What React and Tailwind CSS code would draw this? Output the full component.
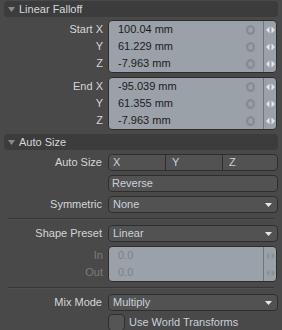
import React from 'react';

const Tri = () => (
    <svg width="7" height="5" viewBox="0 0 7 5" className="shrink-0">
        <path d="M0 0 H7 L3.5 5 Z" fill="#8a8a8a" />
    </svg>
);

const Header = ({ title }) => (
    <div className="mx-[4px] h-[16px] rounded-[4px] bg-[#3c3c3c] flex items-center pl-[4px] gap-[4px] text-[#d4d8dc]">
        <Tri />
        <span className="leading-none">{title}</span>
    </div>
);

const Arrows = ({ dim }) => (
    <svg width="9" height="8" viewBox="0 0 9 8">
        <g fill={dim ? '#8a9096' : '#e2e6ea'}>
            <path d="M0 4 L3.5 0.5 V7.5 Z" />
            <path d="M9 4 L5.5 0.5 V7.5 Z" />
        </g>
    </svg>
);

const Ring = () => (
    <svg width="9" height="10" viewBox="0 0 9 10">
        <ellipse cx="4.5" cy="5" rx="3.4" ry="3.9" fill="none" stroke="#858b91" strokeWidth="2.2" />
    </svg>
);

const Label = ({ text, dim }) => (
    <div className={`w-[103px] shrink-0 text-right pr-[1px] ${dim ? 'text-[#7c7c7c]' : 'text-[#d6d6d6]'}`}>{text}</div>
);

// boxed group of numeric fields, one row per label
const FieldGroup = ({ rows, dim, ring = true }) => (
    <div className="flex">
        <div className="w-[103px] shrink-0 flex flex-col py-[1px]">
            {rows.map((r) => (
                <div key={r.label} className={`h-[17px] flex items-center justify-end ${dim ? 'text-[#7c7c7c]' : 'text-[#d6d6d6]'}`}>{r.label}</div>
            ))}
        </div>
        <div className="ml-[5px] w-[169px] rounded-[4px] border border-[#2c2c2c] bg-[#9aa1a8] flex">
            <div className="flex-1 flex flex-col">
                {rows.map((r) => (
                    <div key={r.label} className={`h-[17px] flex items-center pl-[9px] pr-[8px] ${dim ? 'text-[#7a8187]' : 'text-[#1c1c1c]'}`}>
                        <span className="flex-1">{r.value}</span>
                        {ring && <Ring />}
                    </div>
                ))}
            </div>
            <div className="w-[13px] border-l border-[#6e757b] flex flex-col">
                {rows.map((r) => (
                    <div key={r.label} className="h-[17px] flex items-center justify-center">
                        <Arrows dim={dim} />
                    </div>
                ))}
            </div>
        </div>
    </div>
);

const Btn = ({ children, className = '' }) => (
    <div className={`h-[17px] rounded-[4px] border border-[#2e2e2e] bg-[#525252] text-[#c9d1db] flex items-center ${className}`}>{children}</div>
);

const Dropdown = ({ value }) => (
    <Btn className="w-[170px] pl-[4px] pr-[5px]">
        <span className="flex-1">{value}</span>
        <svg width="7" height="4" viewBox="0 0 7 4">
            <path d="M0 0 H7 L3.5 4 Z" fill="#e8e8e8" />
        </svg>
    </Btn>
);

const Row = ({ label, children }) => (
    <div className="flex items-center">
        <Label text={label} />
        <div className="ml-[5px]">{children}</div>
    </div>
);

const Sep = () => (
    <div className="mx-[8px] border-t border-[#363636] border-b border-b-[#505050] h-0" />
);

export default function App() {
    return (
        <div className="w-[282px] h-[330px] overflow-hidden bg-[#494949] text-[11px] leading-none pt-[1px]" style={{ fontFamily: '"Liberation Sans", Arial, sans-serif' }}>
            <Header title="Linear Falloff" />
            <div className="mt-[3px] flex flex-col gap-[4px]">
                <FieldGroup rows={[
                    { label: 'Start X', value: '100.04 mm' },
                    { label: 'Y', value: '61.229 mm' },
                    { label: 'Z', value: '-7.963 mm' },
                ]} />
                <FieldGroup rows={[
                    { label: 'End X', value: '-95.039 mm' },
                    { label: 'Y', value: '61.355 mm' },
                    { label: 'Z', value: '-7.963 mm' },
                ]} />
            </div>
            <div className="mt-[4px]">
                <Header title="Auto Size" />
            </div>
            <div className="mt-[4px] flex flex-col gap-[4px]">
                <Row label="Auto Size">
                    <Btn className="w-[170px]">
                        <div className="w-[56px] h-full flex items-center pl-[4px]">X</div>
                        <div className="w-[57px] h-full flex items-center pl-[6px] border-l border-[#2e2e2e]">Y</div>
                        <div className="flex-1 h-full flex items-center pl-[6px] border-l border-[#2e2e2e]">Z</div>
                    </Btn>
                </Row>
                <Row label="">
                    <Btn className="w-[170px] pl-[3px]">Reverse</Btn>
                </Row>
                <Row label="Symmetric">
                    <Dropdown value="None" />
                </Row>
            </div>
            <div className="mt-[5px]">
                <Sep />
            </div>
            <div className="mt-[5px] flex flex-col gap-[4px]">
                <Row label="Shape Preset">
                    <Dropdown value="Linear" />
                </Row>
                <FieldGroup dim ring={false} rows={[
                    { label: 'In', value: '0.0' },
                    { label: 'Out', value: '0.0' },
                ]} />
            </div>
            <div className="mt-[5px]">
                <Sep />
            </div>
            <div className="mt-[5px] flex flex-col gap-[3px]">
                <Row label="Mix Mode">
                    <Dropdown value="Multiply" />
                </Row>
                <div className="flex items-center pl-[108px] gap-[4px]">
                    <div className="w-[17px] h-[17px] rounded-[4px] border border-[#2e2e2e] bg-[#555555]" />
                    <span className="text-[#c9d1db]">Use World Transforms</span>
                </div>
            </div>
        </div>
    );
}
